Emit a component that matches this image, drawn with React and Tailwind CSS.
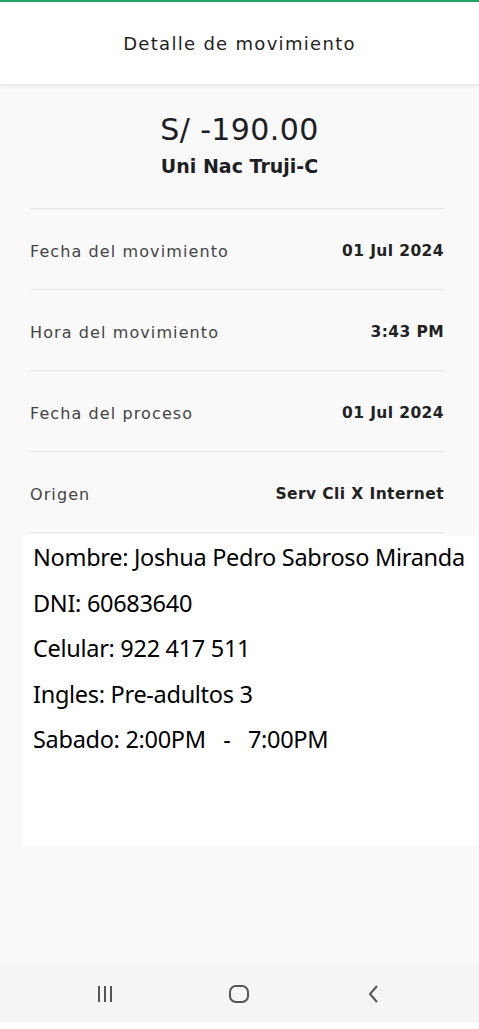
import React from 'react';

const rows = [
  { label: 'Fecha del movimiento', value: '01 Jul 2024' },
  { label: 'Hora del movimiento', value: '3:43 PM' },
  { label: 'Fecha del proceso', value: '01 Jul 2024' },
  { label: 'Origen', value: 'Serv Cli X Internet' },
];

const notes = [
  'Nombre: Joshua Pedro Sabroso Miranda',
  'DNI: 60683640',
  'Celular: 922 417 511',
  'Ingles: Pre-adultos 3',
  'Sabado: 2:00PM \u00a0 - \u00a0 7:00PM',
];

const App = () => {
  return (
    <div className="w-[479px] h-[1029px] bg-[#f9f9f9] flex flex-col font-['DejaVu_Sans',sans-serif] text-[#1c1c1c]">
      {/* Header */}
      <div className="h-[2px] bg-[#21a566]" />
      <div className="h-[82px] bg-white flex items-center justify-center shadow-[0_2px_4px_rgba(0,0,0,0.08)] z-10">
        <h1 className="text-[18px] tracking-[1.3px] text-[#222]">Detalle de movimiento</h1>
      </div>

      {/* Amount */}
      <div className="flex flex-col items-center pt-[27px]">
        <div className="text-[30px] leading-[38px] tracking-[0.4px] text-[#1c2024]">S/ -190.00</div>
        <div className="text-[19px] leading-[26px] font-semibold mt-[4px] text-[#1c2024]">Uni Nac Truji-C</div>
      </div>

      <div className="ml-[30px] mr-[35px] mt-[29px]">
        <div className="h-px bg-[#e6e6e6]" />
        {rows.map((r, i) => (
          <div key={i}>
            <div className="h-[80px] pt-[6px] flex items-center justify-between">
              <span className="text-[16px] tracking-[1.1px] text-[#444]">{r.label}</span>
              <span className="text-[15.5px] tracking-[0.4px] font-bold text-[#222]">{r.value}</span>
            </div>
            <div className="h-px bg-[#e6e6e6]" />
          </div>
        ))}
      </div>

      {/* Pasted note */}
      <div className="ml-[22px] mt-[2px] h-[311px] bg-white pl-[11px] font-['Noto_Sans',sans-serif] text-black">
        {notes.map((n, i) => (
          <div key={i} className="text-[23.5px] leading-[45.6px] tracking-[-0.3px] whitespace-pre">{n}</div>
        ))}
      </div>

      <div className="flex-1" />

      {/* Android nav bar */}
      <div className="h-[56px] bg-[#f5f5f5] flex items-center justify-around px-[38px]">
        <svg width="20" height="20" viewBox="0 0 20 20" className="text-[#555]">
          <path d="M4 2v16M10 2v16M16 2v16" stroke="currentColor" strokeWidth="2" fill="none" />
        </svg>
        <svg width="22" height="22" viewBox="0 0 22 22" className="text-[#555]">
          <rect x="2" y="3" width="18" height="16" rx="6" stroke="currentColor" strokeWidth="2" fill="none" />
        </svg>
        <svg width="20" height="20" viewBox="0 0 20 20" className="text-[#555]">
          <path d="M13 2L6 10l7 8" stroke="currentColor" strokeWidth="2" fill="none" />
        </svg>
      </div>
      <div className="h-[7px] bg-white" />
    </div>
  );
};

export default App;
